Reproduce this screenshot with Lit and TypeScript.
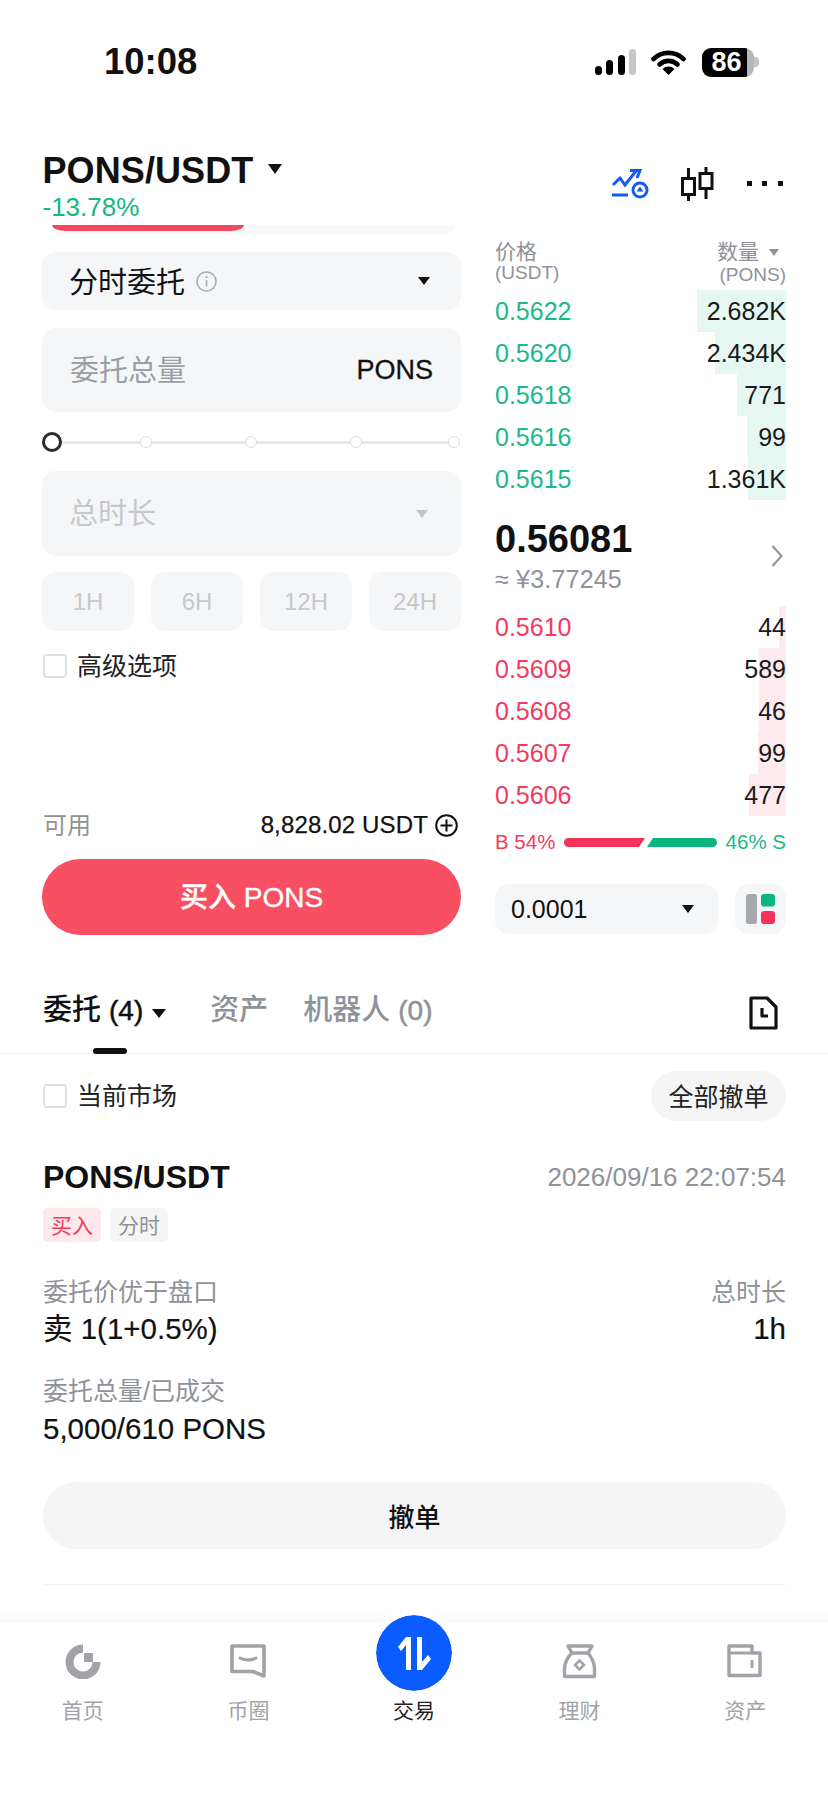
import { LitElement, html, css, svg } from "lit";
import { customElement } from "lit/decorators.js";

const asks = [
  { p: "0.5622", q: "2.682K", w: 89 },
  { p: "0.5620", q: "2.434K", w: 71 },
  { p: "0.5618", q: "771", w: 49 },
  { p: "0.5616", q: "99", w: 39 },
  { p: "0.5615", q: "1.361K", w: 38 },
];
const bids = [
  { p: "0.5610", q: "44", w: 7 },
  { p: "0.5609", q: "589", w: 27 },
  { p: "0.5608", q: "46", w: 27 },
  { p: "0.5607", q: "99", w: 28 },
  { p: "0.5606", q: "477", w: 37 },
];

const navIcons = [
  svg`<path d="M18 4.5A13.5 13.5 0 1 0 31.5 18" fill="none" stroke="currentColor" stroke-width="8"/><rect x="19" y="9" width="9" height="9" fill="currentColor"/>`,
  svg`<path d="M2 2H34V32L23 27.5H2Z" fill="none" stroke="currentColor" stroke-width="3.6" stroke-linejoin="round"/><path d="M10 14Q18 18 26 14" fill="none" stroke="currentColor" stroke-width="3" stroke-linecap="round"/>`,
  svg``,
  svg`<path d="M6 2H30L26 9H10Z" fill="none" stroke="currentColor" stroke-width="3.4" stroke-linejoin="round"/><path d="M10 9C5 14 2.5 18 2.5 25V32.5H32.5V25C32.5 18 30 14 26 9" fill="none" stroke="currentColor" stroke-width="3.4" stroke-linejoin="round"/><path d="M17.5 16.5L22 21L17.5 25.5L13 21Z" fill="none" stroke="currentColor" stroke-width="2.6"/>`,
  svg`<path d="M2 2H25V9H33V31.5H2Z" fill="none" stroke="currentColor" stroke-width="3.4" stroke-linejoin="round"/><path d="M2 9H25" fill="none" stroke="currentColor" stroke-width="3"/><path d="M25 16V24" fill="none" stroke="currentColor" stroke-width="3"/>`,
];
const navLabels = ["首页", "币圈", "交易", "理财", "资产"];

@customElement("app-root")
export class AppRoot extends LitElement {
  static styles = css`
    :host {
      display: block;
      width: 828px;
      height: 1796px;
      overflow: hidden;
      background: #fff;
      color: #111;
      font-family: "Liberation Sans", "Noto Sans CJK SC", sans-serif;
    }
    svg { display: block; flex: none; }
    .caret {
      width: 0;
      height: 0;
      flex: none;
      border-left: 6px solid transparent;
      border-right: 6px solid transparent;
      border-top: 8px solid #111;
    }
    .status {
      height: 124px;
      display: flex;
      align-items: center;
      padding: 0 69px 0 104px;
      box-sizing: border-box;
    }
    .time { font-size: 36.5px; font-weight: 700; line-height: 40px; flex: 1; }
    .signal { margin-right: 15px; }
    .wifi { margin-right: 16px; }
    .battery {
      width: 52px;
      height: 29px;
      border-radius: 9px;
      background: linear-gradient(90deg, #000 0 45px, #b8b8b8 45px);
      color: #fff;
      font-size: 27px;
      font-weight: 700;
      line-height: 29px;
      text-align: center;
      box-sizing: border-box;
      padding-right: 3px;
    }
    .nub { width: 5px; height: 10px; background: #c4c4c4; border-radius: 0 4px 4px 0; }

    .head {
      height: 101px;
      box-sizing: border-box;
      padding: 27px 44px 0 42.5px;
      display: flex;
      justify-content: space-between;
    }
    .title-row { display: flex; align-items: center; gap: 15px; }
    .title { font-size: 36px; font-weight: 700; line-height: 40px; letter-spacing: 0.1px; }
    .title-row .caret { border-left-width: 7px; border-right-width: 7px; border-top-width: 10px; margin-top: -4px; }
    .pct { font-size: 26px; line-height: 32px; color: #13b883; }
    .tools { display: flex; margin-top: 16px; height: 36px; align-items: center; }

    .main { display: flex; gap: 34px; padding: 0 42px; }
    .left { width: 419px; display: flex; flex-direction: column; }
    .right { width: 291px; display: flex; flex-direction: column; }

    .clip {
      height: 10px;
      margin: 0 7px 0 10px;
      background: #f7f8f9;
      border-radius: 0 0 14px 14px;
      overflow: hidden;
    }
    .clip div { width: 192px; height: 6px; background: #f5475f; border-radius: 0 0 14px 14px / 0 0 6px 6px; }
    .box {
      background: #f5f6f8;
      border-radius: 14px;
      display: flex;
      align-items: center;
      box-sizing: border-box;
    }
    .sel1 { margin-top: 17px; height: 58px; padding: 0 31px 0 27px; font-size: 29px; }
    .sel1 span:first-child { padding-bottom: 2px; }
    .sel1 svg { margin-left: 11px; }
    .sel1 .caret { margin-left: auto; }
    .input { margin-top: 18px; height: 84px; padding: 0 28px; justify-content: space-between; font-size: 29px; color: #9a9ea5; }
    .input span { padding-bottom: 4px; }
    .input b { font-weight: 400; font-size: 27px; color: #111; -webkit-text-stroke: 0.3px #111; }
    .slider { margin-top: 20px; height: 20px; display: flex; align-items: center; position: relative; }
    .slider::before { content: ""; position: absolute; left: 8px; right: 7px; top: 9px; height: 3px; background: #e6e7e9; }
    .thumb { width: 20px; height: 20px; box-sizing: border-box; border: 3.5px solid #2a2a2a; border-radius: 50%; background: #fff; position: relative; flex: none; }
    .tick { width: 12px; height: 12px; box-sizing: border-box; border: 1.5px solid #dcdddf; border-radius: 50%; background: #fff; position: relative; flex: none; margin-left: 93px; }
    .thumb + .tick { margin-left: 78px; }
    .tick:last-child { margin-left: 86px; }
    .sel2 { margin-top: 19px; height: 85px; padding: 0 33px 0 27px; justify-content: space-between; font-size: 29px; color: #c6c8cc; }
    .sel2 span:first-child { padding-bottom: 6px; }
    .sel2 .caret { border-top-color: #c2c4c8; border-left-width: 6px; border-right-width: 6px; }
    .durs { margin-top: 16px; display: grid; grid-template-columns: repeat(4, 92px); justify-content: space-between; }
    .durs div {
      height: 59px;
      border-radius: 14px;
      background: #f5f6f8;
      color: #c6c8cc;
      font-size: 24px;
      display: flex;
      align-items: center;
      justify-content: center;
    }
    .check { display: flex; align-items: center; gap: 10px; font-size: 25px; line-height: 24px; color: #222; }
    .check i { width: 24px; height: 24px; box-sizing: border-box; border: 2px solid #dfe0e2; border-radius: 4px; flex: none; }
    .adv { margin-top: 23px; margin-left: 1px; }
    .avail {
      margin-top: 134px;
      height: 26px;
      display: flex;
      align-items: center;
      font-size: 24px;
      padding-left: 1px;
      padding-right: 3px;
    }
    .avail .k { color: #8f9298; flex: 1; padding-bottom: 4px; }
    .avail .v { letter-spacing: 0.15px; -webkit-text-stroke: 0.25px #111; }
    .avail svg { margin-left: 7px; }
    .buy {
      margin-top: 21px;
      height: 76px;
      box-sizing: border-box;
      padding-bottom: 4px;
      border-radius: 38px;
      background: #f94f63;
      color: #fff;
      font-size: 28px;
      font-weight: 500;
      -webkit-text-stroke: 0.35px #fff;
      display: flex;
      align-items: center;
      justify-content: center;
    }

    .ob-head { padding-top: 15px; height: 65px; box-sizing: border-box; display: flex; justify-content: space-between; color: #8f9298; }
    .ob-head .t { font-size: 21px; line-height: 24px; display: flex; align-items: center; gap: 10px; }
    .ob-head .u { font-size: 19px; line-height: 22px; margin-top: -2px; }
    .ob-head .r .t { justify-content: flex-end; }
    .ob-head .r .u { margin-top: 0; text-align: right; }
    .ob-head .caret { border-top-color: #8f9298; border-left-width: 5px; border-right-width: 5px; border-top-width: 7px; margin-right: 7px; }
    .row {
      height: 42px;
      display: flex;
      justify-content: space-between;
      align-items: center;
      font-size: 25px;
      background-repeat: no-repeat;
      background-position: right top;
      background-size: var(--w) 100%;
    }
    .row.g { background-image: linear-gradient(#e6f7f1, #e6f7f1); }
    .row.r { background-image: linear-gradient(#fdeaee, #fdeaee); }
    .row.g span:first-child { color: #1ab98a; }
    .row.r span:first-child { color: #f23a63; }
    .row span:last-child { color: #1a1a1a; }
    .mid { display: flex; justify-content: space-between; align-items: center; padding-right: 3px; margin-top: 17px; margin-bottom: 11px; }
    .price { font-size: 38px; font-weight: 700; line-height: 44px; }
    .cny { font-size: 25px; line-height: 32px; margin-top: 2px; letter-spacing: 0.2px; color: #8f9298; }
    .ratio { margin-top: 13px; height: 26px; display: flex; align-items: center; justify-content: space-between; font-size: 20.5px; }
    .ratio .b { color: #f23a63; }
    .ratio .s { color: #1ab98a; }
    .tick-row { margin-top: 29px; display: flex; justify-content: space-between; }
    .tsel { width: 223px; height: 50px; padding: 0 24px 0 16px; justify-content: space-between; font-size: 25px; }
    .layout { width: 51px; height: 50px; justify-content: center; }

    .tabs {
      height: 119px;
      box-sizing: border-box;
      border-bottom: 1px solid #f0f1f2;
      padding: 55px 50px 0 43px;
      display: flex;
      align-items: flex-start;
      font-size: 29px;
      font-weight: 500;
      line-height: 40px;
      color: #8f9298;
      position: relative;
    }
    .tab { display: flex; align-items: center; }
    .tab b { font-weight: 400; font-size: 28px; -webkit-text-stroke: 0.5px currentColor; margin-left: 8px; }
    .tab.on { color: #111; gap: 9px; }
    .tab.on .caret { border-left-width: 7px; border-right-width: 7px; border-top-width: 9px; margin-top: 6px; }
    .tab.a { margin-left: 44px; }
    .tab.c { margin-left: 35px; }
    .tabs svg { margin-left: auto; margin-top: 6px; }
    .tabs::after {
      content: "";
      position: absolute;
      left: 93px;
      bottom: -1px;
      width: 34px;
      height: 6px;
      border-radius: 3px;
      background: #111;
    }
    .orders { padding: 17px 42px 0 43px; }
    .filter { display: flex; align-items: center; justify-content: space-between; }
    .all {
      height: 50px;
      width: 135px;
      box-sizing: border-box;
      padding-bottom: 2px;
      border-radius: 25px;
      background: #f5f5f6;
      font-size: 25px;
      display: flex;
      align-items: center;
      justify-content: center;
      color: #222;
    }
    .o-top { margin-top: 40px; display: flex; justify-content: space-between; align-items: center; }
    .o-name { font-size: 32px; font-weight: 700; line-height: 32px; }
    .o-date { font-size: 26px; line-height: 32px; color: #8f9298; }
    .tags { margin-top: 15px; display: flex; gap: 9px; }
    .tags span {
      width: 58px;
      height: 34px;
      box-sizing: border-box;
      padding-bottom: 2px;
      border-radius: 5px;
      font-size: 21px;
      display: flex;
      align-items: center;
      justify-content: center;
    }
    .tags .buytag { background: #fde8ec; color: #f23a63; }
    .tags .kind { background: #f5f5f6; color: #8f9298; }
    .pair { display: flex; justify-content: space-between; }
    .pair.p1 { margin-top: 34px; }
    .pair.p2 { margin-top: 29px; }
    .lab { font-size: 25px; line-height: 32px; color: #8f9298; }
    .val { font-size: 29.5px; line-height: 34px; color: #111; margin-top: 4px; -webkit-text-stroke: 0.2px #111; }
    .p2 .val { margin-top: 5px; }
    .pair .end { text-align: right; }
    .cancel {
      margin-top: 36px;
      height: 67px;
      border-radius: 34px;
      background: #f5f5f6;
      font-size: 26px;
      font-weight: 500;
      display: flex;
      align-items: center;
      justify-content: center;
      color: #111;
    }
    .rule { margin-top: 35px; height: 1px; background: #f2f3f4; }

    .nav {
      margin-top: 24px;
      height: 188px;
      display: grid;
      grid-template-columns: repeat(5, 1fr);
      position: relative;
    }
    .nav::before {
      content: "";
      position: absolute;
      left: 0;
      right: 0;
      top: 0;
      height: 14px;
      background: linear-gradient(#fefefe, #fafafb);
    }
    .item {
      position: relative;
      display: flex;
      flex-direction: column;
      align-items: center;
      padding-top: 35px;
      color: #a1a3a8;
      font-size: 21px;
      line-height: 26px;
    }
    .item svg { margin-bottom: 19px; }
    .item.on { padding-top: 6px; color: #222; }
    .item.on svg { margin-bottom: 7px; }
    .fab { border-radius: 50%; box-shadow: 0 0 0 7px #fff; }
  `;

  private orderRow(r: { p: string; q: string; w: number }, cls: string) {
    return html`<div class="row ${cls}" style="--w:${r.w}px"><span>${r.p}</span><span>${r.q}</span></div>`;
  }

  render() {
    return html`
      <div class="status">
        <div class="time">10:08</div>
        <svg class="signal" width="41" height="26" viewBox="0 0 41 26">
          <rect x="0" y="17" width="7" height="9" rx="3.5" fill="#000"/>
          <rect x="11" y="11" width="7" height="15" rx="3.5" fill="#000"/>
          <rect x="23" y="6" width="7" height="20" rx="3.5" fill="#000"/>
          <rect x="34" y="0" width="7" height="26" rx="3.5" fill="#c6c6c6"/>
        </svg>
        <svg class="wifi" width="35" height="26" viewBox="0 0 35 26">
          <path d="M2.5 10A21.5 21.5 0 0 1 32.5 10" fill="none" stroke="#000" stroke-width="4.6" stroke-linecap="round"/>
          <path d="M8.5 15.5A13 13 0 0 1 26.5 15.5" fill="none" stroke="#000" stroke-width="4.6" stroke-linecap="round"/>
          <path d="M17.5 26L11.5 20A8.5 8.5 0 0 1 23.5 20Z" fill="#000"/>
        </svg>
        <div class="battery">86</div>
        <div class="nub"></div>
      </div>

      <div class="head">
        <div>
          <div class="title-row"><span class="title">PONS/USDT</span><span class="caret"></span></div>
          <div class="pct">-13.78%</div>
        </div>
        <div class="tools">
          <svg width="172" height="36" viewBox="0 0 172 36" fill="none">
            <g stroke="#1559f5" stroke-width="3">
              <path d="M1 18L8 11L13 18L24 4"/>
              <path d="M18 3.5H28L25 11"/>
              <path d="M0 28H16"/>
              <circle cx="28" cy="23" r="7"/>
            </g>
            <path d="M28 19.5L31.5 24.5H24.5Z" fill="#1559f5"/>
            <g stroke="#111" stroke-width="3">
              <path d="M76.5 1V34"/>
              <rect x="70.5" y="11.5" width="12" height="16" fill="#fff"/>
              <path d="M94 -1V32"/>
              <rect x="88" y="6.5" width="12" height="15" fill="#fff"/>
            </g>
            <g fill="#111">
              <rect x="135" y="14" width="5" height="5"/>
              <rect x="150" y="14" width="5" height="5"/>
              <rect x="166" y="14" width="5" height="5"/>
            </g>
          </svg>
        </div>
      </div>

      <div class="main">
        <div class="left">
          <div class="clip"><div></div></div>
          <div class="box sel1">
            <span>分时委托</span>
            <svg width="21" height="21" viewBox="0 0 21 21" fill="none">
              <circle cx="10.5" cy="10.5" r="9.5" stroke="#a8abb0" stroke-width="1.6"/>
              <path d="M10.5 9V15.5" stroke="#a8abb0" stroke-width="1.6"/>
              <circle cx="10.5" cy="6.2" r="1.1" fill="#a8abb0"/>
            </svg>
            <span class="caret"></span>
          </div>
          <div class="box input"><span>委托总量</span><b>PONS</b></div>
          <div class="slider">
            <span class="thumb"></span>
            <span class="tick"></span>
            <span class="tick"></span>
            <span class="tick"></span>
            <span class="tick"></span>
          </div>
          <div class="box sel2"><span>总时长</span><span class="caret"></span></div>
          <div class="durs"><div>1H</div><div>6H</div><div>12H</div><div>24H</div></div>
          <div class="check adv"><i></i><span>高级选项</span></div>
          <div class="avail">
            <span class="k">可用</span>
            <span class="v">8,828.02 USDT</span>
            <svg width="23" height="23" viewBox="0 0 23 23" fill="none" stroke="#111" stroke-width="2">
              <circle cx="11.5" cy="11.5" r="10.3"/>
              <path d="M11.5 5.5V17.5M5.5 11.5H17.5"/>
            </svg>
          </div>
          <div class="buy">买入 PONS</div>
        </div>

        <div class="right">
          <div class="ob-head">
            <div><div class="t">价格</div><div class="u">(USDT)</div></div>
            <div class="r"><div class="t">数量<span class="caret"></span></div><div class="u">(PONS)</div></div>
          </div>
          ${asks.map((r) => this.orderRow(r, "g"))}
          <div class="mid">
            <div>
              <div class="price">0.56081</div>
              <div class="cny">≈ ¥3.77245</div>
            </div>
            <svg width="12" height="24" viewBox="0 0 12 24" fill="none" stroke="#8f9298" stroke-width="2"><path d="M1.5 2L10.5 12L1.5 22"/></svg>
          </div>
          ${bids.map((r) => this.orderRow(r, "r"))}
          <div class="ratio">
            <span class="b">B 54%</span>
            <svg width="153" height="9" viewBox="0 0 153 9">
              <path d="M4.5 0H81L75 9H4.5A4.5 4.5 0 0 1 4.5 0Z" fill="#f5325c"/>
              <path d="M89 0H148.5A4.5 4.5 0 0 1 148.5 9H83Z" fill="#0bb67e"/>
            </svg>
            <span class="s">46% S</span>
          </div>
          <div class="tick-row">
            <div class="box tsel"><span>0.0001</span><span class="caret"></span></div>
            <div class="box layout">
              <svg width="30" height="30" viewBox="0 0 30 30">
                <rect x="0" y="0" width="11" height="30" rx="2.5" fill="#a6a8ad"/>
                <rect x="15" y="0" width="14" height="12.5" rx="3" fill="#0bb67e"/>
                <rect x="15" y="17" width="14" height="13" rx="3" fill="#f5325c"/>
              </svg>
            </div>
          </div>
        </div>
      </div>

      <div class="tabs">
        <div class="tab on"><span>委托<b>(4)</b></span><span class="caret"></span></div>
        <div class="tab a">资产</div>
        <div class="tab c"><span>机器人<b>(0)</b></span></div>
        <svg width="29" height="34" viewBox="0 0 29 34" fill="none" stroke="#111" stroke-width="3.2" stroke-linejoin="round">
          <path d="M2 2H18L27 11V32H2Z"/>
          <path d="M13 12V20H19"/>
        </svg>
      </div>

      <div class="orders">
        <div class="filter">
          <div class="check"><i></i><span>当前市场</span></div>
          <div class="all">全部撤单</div>
        </div>
        <div class="o-top">
          <span class="o-name">PONS/USDT</span>
          <span class="o-date">2026/09/16 22:07:54</span>
        </div>
        <div class="tags"><span class="buytag">买入</span><span class="kind">分时</span></div>
        <div class="pair p1">
          <div><div class="lab">委托价优于盘口</div><div class="val">卖 1(1+0.5%)</div></div>
          <div class="end"><div class="lab">总时长</div><div class="val">1h</div></div>
        </div>
        <div class="pair p2">
          <div><div class="lab">委托总量/已成交</div><div class="val">5,000/610 PONS</div></div>
        </div>
        <div class="cancel">撤单</div>
        <div class="rule"></div>
      </div>

      <div class="nav">
        ${navLabels.map((label, i) =>
          i === 2
            ? html`<div class="item on">
                <svg class="fab" width="76" height="76" viewBox="0 0 76 76">
                  <circle cx="38" cy="38" r="38" fill="#0a5cff"/>
                  <path d="M35 22V55H30V30L25 36L22 32L30 22Z" fill="#fff"/>
                  <path d="M41 55V22H46V47L52 40L55 44L46 55Z" fill="#fff"/>
                </svg>
                <span>${label}</span>
              </div>`
            : html`<div class="item">
                <svg width="36" height="35" viewBox="0 0 36 35">${navIcons[i]}</svg>
                <span>${label}</span>
              </div>`
        )}
      </div>
    `;
  }
}
